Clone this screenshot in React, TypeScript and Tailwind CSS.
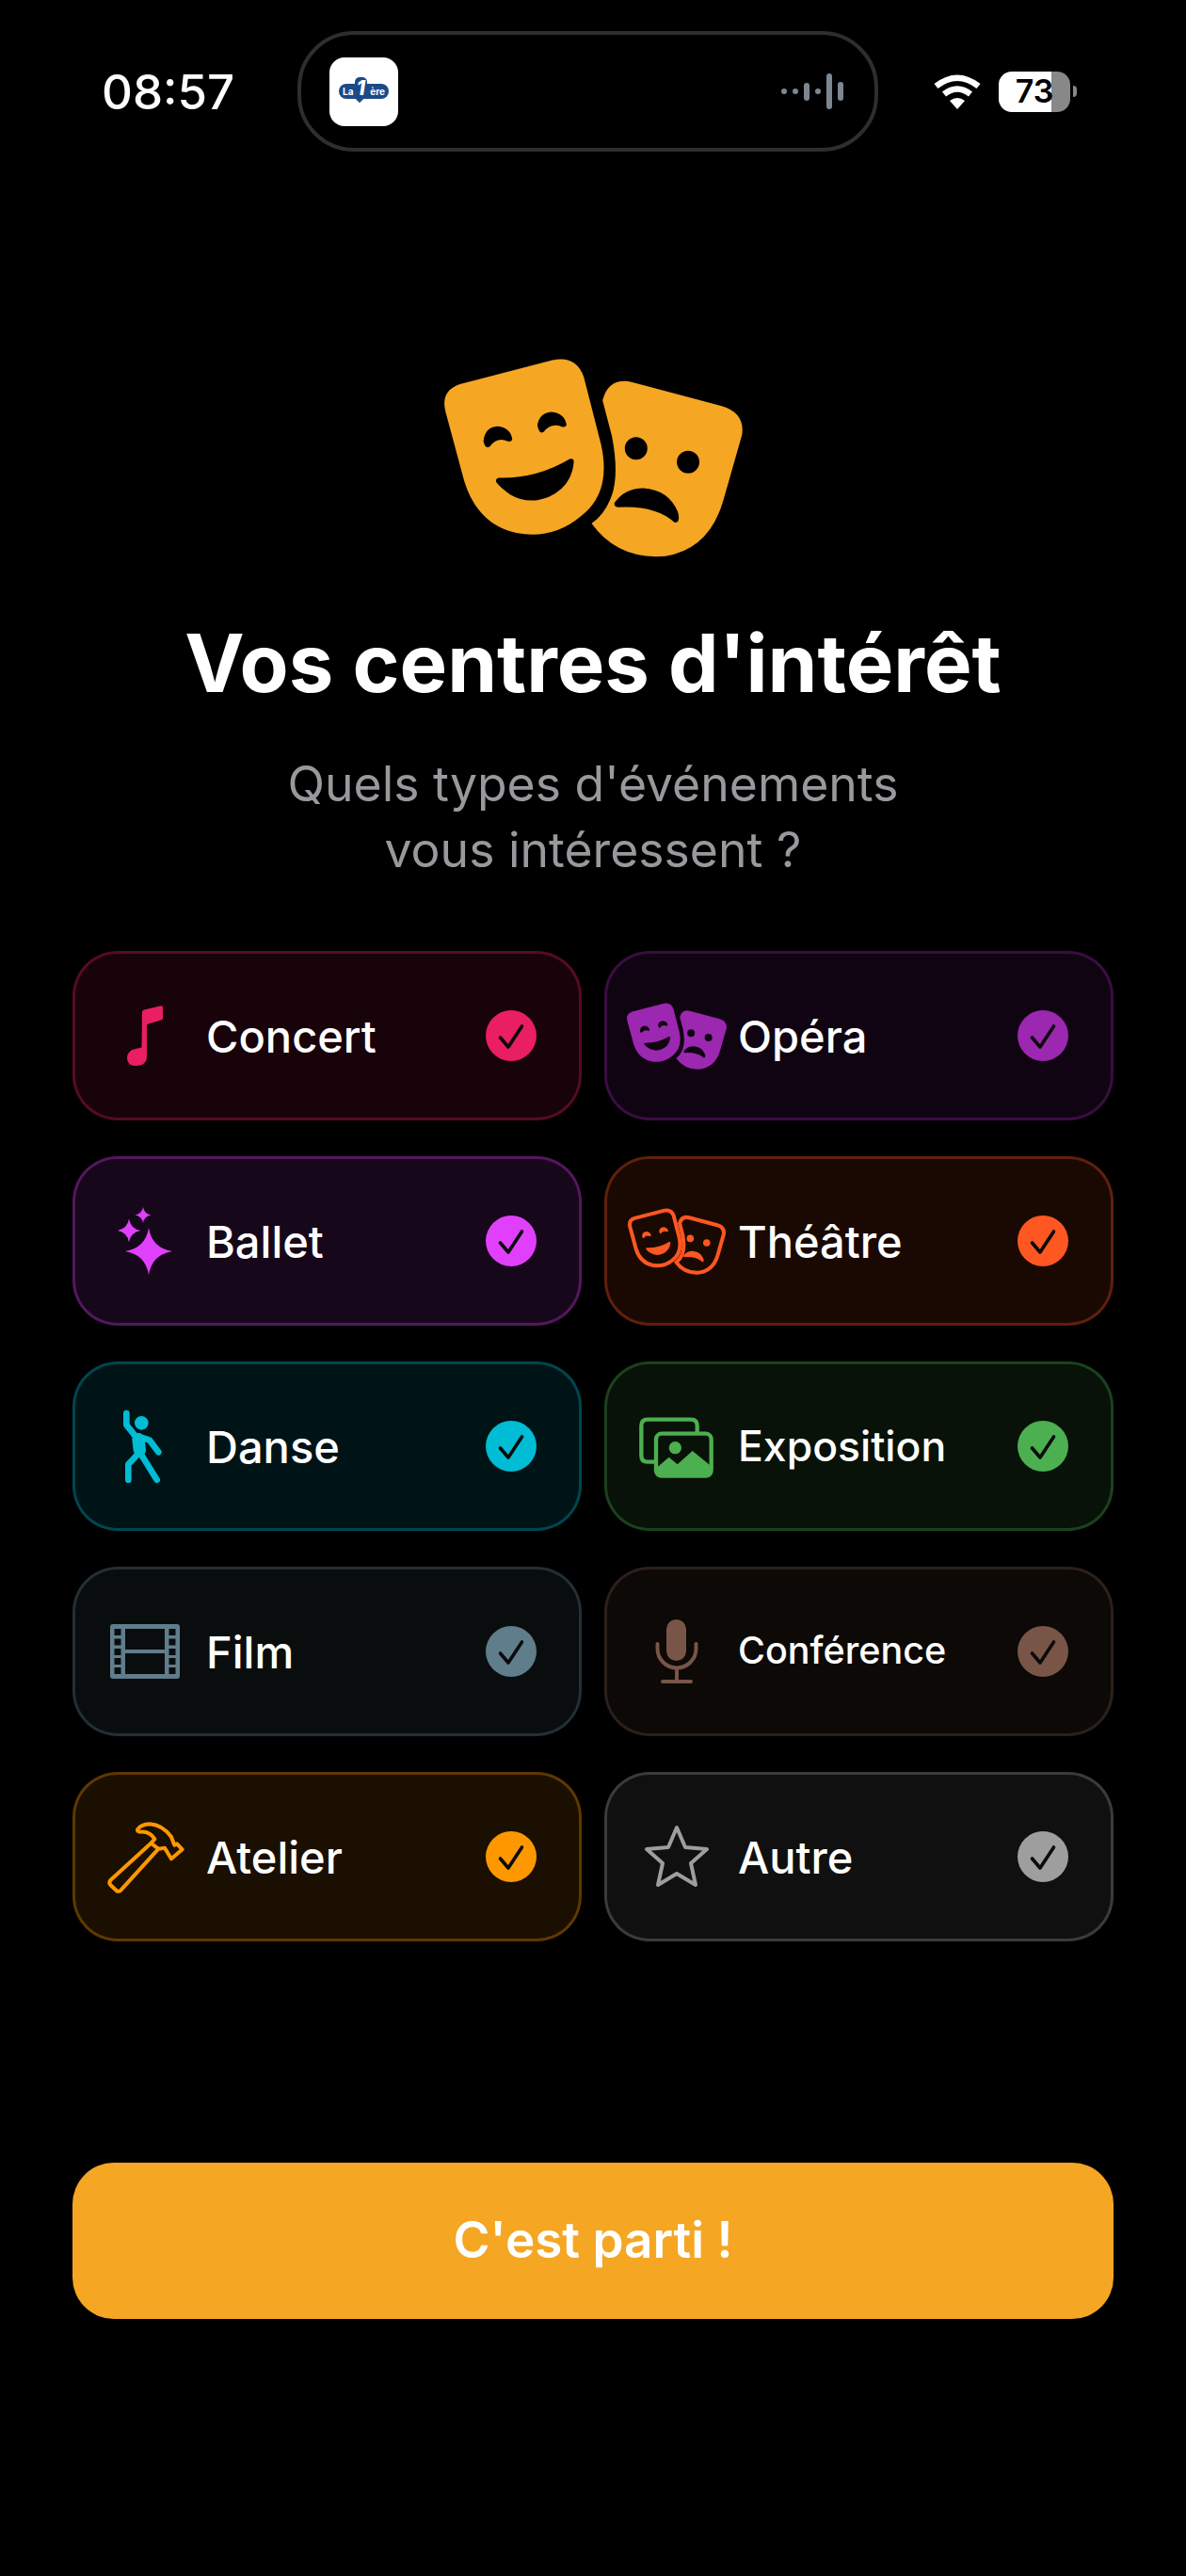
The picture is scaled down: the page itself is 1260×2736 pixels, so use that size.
import type { ReactNode } from 'react';

const LEFT_MASK =
  'M205 173 L500 97 Q575 80 600 150 L655 365 Q690 520 590 595 Q500 670 385 648 Q260 620 218 480 L160 265 Q140 195 205 173 Z';
const LEFT_FACE =
  'M280 355 Q285 310 325 308 Q365 312 372 348 Q370 358 358 356 Q325 340 300 372 Q285 382 280 355 Z M452 305 Q458 265 497 262 Q538 265 545 303 Q543 312 530 309 Q495 295 472 326 Q458 335 452 305 Z M328 472 Q450 475 555 412 Q570 408 568 425 Q560 500 490 532 Q425 560 365 525 Q335 505 320 485 Q320 472 328 472 Z';
const RIGHT_MASK =
  'M660 225 Q680 150 755 167 L1040 243 Q1115 265 1105 335 L1045 545 Q1000 700 860 722 Q710 735 625 618 Q665 590 685 540 Q715 470 690 340 Z';
const RIGHT_FACE =
  'M731 378 A36 36 0 1 0 803 378 A36 36 0 1 0 731 378 Z M897 422 A36 36 0 1 0 969 422 A36 36 0 1 0 897 422 Z M698 552 Q730 505 790 505 Q870 510 900 580 Q910 615 890 615 Q830 560 712 566 Q695 565 698 552 Z';

function MasksFilled({ width, height, color }: { width: number; height: number; color: string }) {
  return (
    <svg width={width} height={height} viewBox="155 90 952 635" className="shrink-0">
      <path fill={color} fillRule="evenodd" d={`${LEFT_MASK} ${LEFT_FACE}`} />
      <path fill={color} fillRule="evenodd" d={`${RIGHT_MASK} ${RIGHT_FACE}`} />
    </svg>
  );
}

function MasksOutline({ color }: { color: string }) {
  return (
    <svg width={106} height={71} viewBox="135 70 992 675" className="shrink-0">
      <path d={RIGHT_MASK} fill="none" stroke={color} strokeWidth={38} strokeLinejoin="round" />
      <path d={LEFT_MASK} fill="#1a0903" stroke={color} strokeWidth={38} strokeLinejoin="round" />
      <path d={LEFT_FACE} fill={color} />
      <path d={RIGHT_FACE} fill={color} />
    </svg>
  );
}

function MusicIcon({ color }: { color: string }) {
  return (
    <svg width={38} height={64} viewBox="0 0 38 64" className="shrink-0">
      <path
        fill={color}
        d="M16 7 Q16 5 18 4.5 L36 0.3 Q38 0 38 2 L38 13 Q38 15 36 15.5 L21 20 L21 54 Q21 64 9 64 Q0 64 0 55.5 Q0 48 9 46 L15.5 44.5 Z"
      />
    </svg>
  );
}

function sparkle(cx: number, cy: number, r: number) {
  const k = r * 0.14;
  return `M${cx} ${cy - r} Q${cx + k} ${cy - k} ${cx + r} ${cy} Q${cx + k} ${cy + k} ${cx} ${cy + r} Q${cx - k} ${cy + k} ${cx - r} ${cy} Q${cx - k} ${cy - k} ${cx} ${cy - r} Z`;
}

function SparklesIcon({ color }: { color: string }) {
  return (
    <svg width={58} height={72} viewBox="0 0 58 72" className="shrink-0">
      <path fill={color} d={`${sparkle(33, 47, 25)} ${sparkle(12, 25, 12.5)} ${sparkle(27, 8.5, 8.5)}`} />
    </svg>
  );
}

function DancerIcon({ color }: { color: string }) {
  return (
    <svg width={90} height={100} viewBox="0 0 270 300" className="shrink-0">
      <circle cx={124} cy={76} r={22} fill={color} />
      <g fill="none" stroke={color} strokeLinecap="round" strokeLinejoin="round">
        <path strokeWidth={20} d="M76 45 L76 82 L102 115 L150 131 L178 169" />
        <path strokeWidth={40} d="M114 128 L118 162" />
        <path strokeWidth={20} d="M108 180 L82 208 L82 257 M122 175 L173 257" />
      </g>
    </svg>
  );
}

function FilmIcon({ color }: { color: string }) {
  const rect = (x: number, y: number, w: number, h: number) => `M${x} ${y} h${w} v${h} h${-w} Z`;
  const holes = [5, 15.5, 26, 36, 46]
    .map((y) => `${rect(4.5, y, 7, 7)} ${rect(62.5, y, 7, 7)}`)
    .join(' ');
  return (
    <svg width={74} height={58} viewBox="0 0 74 58" className="shrink-0">
      <path
        fill={color}
        fillRule="evenodd"
        d={`M3 0 H71 Q74 0 74 3 V55 Q74 58 71 58 H3 Q0 58 0 55 V3 Q0 0 3 0 Z ${rect(16, 5, 42, 22)} ${rect(16, 31, 42, 22)} ${holes}`}
      />
    </svg>
  );
}

function HammerIcon({ color }: { color: string }) {
  return (
    <svg width={100} height={95} viewBox="0 0 300 285" className="shrink-0 translate-x-[2px]">
      <path
        fill="none"
        stroke={color}
        strokeWidth={12}
        strokeLinejoin="round"
        d="M163 98 L34 216 Q28 224 34 231 L53 249 Q60 254 67 248 L187 116 L207 113 L228 148 L263 118 L246 100 L238 104 L228 78 Q200 40 160 37 Q130 38 120 55 Q120 62 130 62 Q160 60 175 85 Z M163 98 L187 116"
      />
    </svg>
  );
}

function GalleryIcon({ color }: { color: string }) {
  return (
    <svg width={100} height={80} viewBox="0 0 300 240" className="shrink-0">
      <g fill="none" stroke={color} strokeWidth={13}>
        <path d="M80 170 H57 Q37 170 37 150 V55 Q37 35 57 35 H195 Q215 35 215 55 V78" />
        <rect x={84} y={80} width={176} height={135} rx={18} />
      </g>
      <circle cx={145} cy={125} r={20} fill={color} />
      <path fill={color} d="M90 185 L125 155 L152 178 L200 135 L258 182 V212 H90 Z" />
    </svg>
  );
}

function MicIcon({ color }: { color: string }) {
  return (
    <svg width={46} height={68} viewBox="0 0 46 68" className="shrink-0">
      <rect x={12} y={0} width={21} height={44} rx={10.5} fill={color} />
      <path
        fill="none"
        stroke={color}
        strokeWidth={4}
        strokeLinecap="round"
        d="M2.5 26 V31 A20.5 20.5 0 0 0 43.5 31 V26 M23 52 V65 M8 66 H38"
      />
    </svg>
  );
}

function StarIcon({ color }: { color: string }) {
  return (
    <svg width={70} height={68} viewBox="0 0 70 68" className="shrink-0">
      <path
        fill="none"
        stroke={color}
        strokeWidth={4}
        strokeLinejoin="round"
        d="M35 3 L44 24 L67 26 L50 41 L55 64 L35 52 L15 64 L20 41 L3 26 L26 24 Z"
      />
    </svg>
  );
}

type Interest = {
  label: string;
  icon: ReactNode;
  card: string;
  dot: string;
  text?: string;
};

const interests: Interest[] = [
  {
    label: 'Concert',
    icon: <MusicIcon color="#E91E63" />,
    card: 'bg-[#E91E63]/10 border-[#E91E63]/30',
    dot: 'bg-[#E91E63]',
  },
  {
    label: 'Opéra',
    icon: <MasksFilled width={106} height={71} color="#9C27B0" />,
    card: 'bg-[#9C27B0]/10 border-[#9C27B0]/30',
    dot: 'bg-[#9C27B0]',
  },
  {
    label: 'Ballet',
    icon: <SparklesIcon color="#E040FB" />,
    card: 'bg-[#E040FB]/10 border-[#E040FB]/30',
    dot: 'bg-[#E040FB]',
  },
  {
    label: 'Théâtre',
    icon: <MasksOutline color="#FF5722" />,
    card: 'bg-[#FF5722]/10 border-[#FF5722]/30',
    dot: 'bg-[#FF5722]',
  },
  {
    label: 'Danse',
    icon: <DancerIcon color="#00BCD4" />,
    card: 'bg-[#00BCD4]/10 border-[#00BCD4]/30',
    dot: 'bg-[#00BCD4]',
  },
  {
    label: 'Exposition',
    icon: <GalleryIcon color="#4CAF50" />,
    card: 'bg-[#4CAF50]/10 border-[#4CAF50]/30',
    dot: 'bg-[#4CAF50]',
    text: 'text-[44.5px]',
  },
  {
    label: 'Film',
    icon: <FilmIcon color="#607D8B" />,
    card: 'bg-[#607D8B]/10 border-[#607D8B]/30',
    dot: 'bg-[#607D8B]',
  },
  {
    label: 'Conférence',
    icon: <MicIcon color="#795548" />,
    card: 'bg-[#795548]/10 border-[#795548]/30',
    dot: 'bg-[#795548]',
    text: 'text-[39.5px]',
  },
  {
    label: 'Atelier',
    icon: <HammerIcon color="#FF9800" />,
    card: 'bg-[#FF9800]/10 border-[#FF9800]/30',
    dot: 'bg-[#FF9800]',
  },
  {
    label: 'Autre',
    icon: <StarIcon color="#9E9E9E" />,
    card: 'bg-[#9E9E9E]/10 border-[#9E9E9E]/30',
    dot: 'bg-[#9E9E9E]',
  },
];

function InterestCard({ item }: { item: Interest }) {
  return (
    <div className={`h-[180px] rounded-[48px] border-[3px] pl-[45px] pr-[45px] flex items-center ${item.card}`}>
      <div className="w-[58px] flex justify-center items-center shrink-0">{item.icon}</div>
      <span className={`ml-[36px] flex-1 font-[450] leading-none ${item.text ?? 'text-[47px]'}`}>
        {item.label}
      </span>
      <div className={`w-[54px] h-[54px] rounded-full flex items-center justify-center ${item.dot}`}>
        <svg width={54} height={54} viewBox="0 0 54 54">
          <path
            d="M15.5 29 L24 39 L38.5 17"
            fill="none"
            stroke="#0b0b0b"
            strokeWidth={3.6}
            strokeLinecap="round"
            strokeLinejoin="round"
          />
        </svg>
      </div>
    </div>
  );
}

function AppBadge() {
  return (
    <div className="w-[73px] h-[73px] rounded-[16px] bg-white flex items-center justify-center">
      <div className="relative w-[53px] h-[16px] rounded-full bg-[#1b4a86] flex items-center justify-between px-[4px] text-white text-[10px] font-bold leading-none">
        <span>La</span>
        <span>ère</span>
        {/* the big 1 sticks out of the pill */}
        <div className="absolute left-[17px] -top-[7px] w-[13px] h-[23px] rounded-t-[5px] bg-[#1b4a86] flex items-center justify-center text-[21px] italic font-extrabold text-white">
          1
        </div>
        <div className="absolute left-[19px] top-[13px] w-[6px] h-[6px] rotate-45 bg-[#1b4a86]" />
      </div>
    </div>
  );
}

function AudioWave() {
  const bars = ['h-[6px]', 'h-[6px]', 'h-[19px]', 'h-[6px]', 'h-[38px]', 'h-[20px]'];
  return (
    <div className="flex items-center gap-[6px]">
      {bars.map((h, i) => (
        <div key={i} className={`w-[6px] rounded-full bg-[#7c8792] ${h}`} />
      ))}
    </div>
  );
}

function StatusBar() {
  return (
    <div className="h-[128px] pl-[108px] flex items-center">
      <span className="w-[141px] text-[51px] font-medium leading-none">08:57</span>
      {/* Dynamic island */}
      <div className="ml-[67px] w-[617px] h-[128px] rounded-[60px] border-[4px] border-[#2e2e2e] pl-[30px] pr-[33px] flex items-center justify-between">
        <AppBadge />
        <AudioWave />
      </div>
      <svg width={50} height={37} viewBox="0 0 50 37" className="ml-[59px]">
        <g fill="none" stroke="#fff" strokeWidth={6.5}>
          <path d="M2.5 12.5 Q25 -5 47.5 12.5" />
          <path d="M11 21 Q25 10 39 21" />
        </g>
        <path fill="#fff" d="M17 28 Q25 22 33 28 L25 37 Z" />
      </svg>
      <div className="ml-[19px] w-[76px] h-[43px] rounded-[14px] bg-[linear-gradient(to_right,#fff_74%,#888_74%)] flex items-center justify-center text-black text-[34px] font-semibold leading-none">
        73
      </div>
      <div className="ml-[3px] w-[4px] h-[12px] rounded-r-full bg-[#888]" />
    </div>
  );
}

export default function App() {
  return (
    <div className="min-h-screen pt-[33px] bg-black text-white font-['Inter',sans-serif]">
      <StatusBar />

      <div className="mt-[219px] flex flex-col items-center">
        <MasksFilled width={317} height={212} color="#F5A623" />
        <h1 className="mt-[63px] text-[85px] leading-[100px] font-bold">Vos centres d'intérêt</h1>
        <p className="mt-[42px] text-center text-[51.7px] leading-[70px] text-[#98989d]">
          Quels types d'événements
          <br />
          vous intéressent ?
        </p>
      </div>

      <div className="mt-[73px] px-[77px] grid grid-cols-2 gap-x-[24px] gap-y-[38px]">
        {interests.map((item) => (
          <InterestCard key={item.label} item={item} />
        ))}
      </div>

      <div className="mt-[235px] px-[77px]">
        <button className="w-full h-[166px] rounded-[44px] bg-[#F5A623] text-white text-[53px] font-semibold">
          C'est parti !
        </button>
      </div>
    </div>
  );
}
